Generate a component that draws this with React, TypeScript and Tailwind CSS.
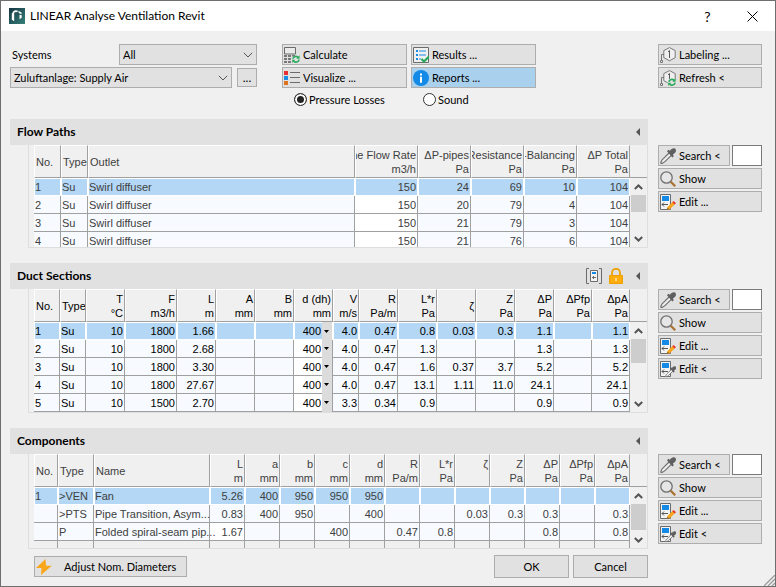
import { useState } from 'react';
import type { ReactNode } from 'react';
import clsx from 'clsx';

type Column = {
  label: string;
  unit?: string;
  width?: number;
  align?: 'left' | 'right';
  top?: boolean;
};

/* ---------- Icons ---------- */

function AppIcon() {
  return (
    <svg width="16" height="16" viewBox="0 0 16 16" className="shrink-0">
      <defs>
        <linearGradient id="app-bg" x1="0" y1="0" x2="1" y2="1">
          <stop offset="0" stopColor="#143541" />
          <stop offset="1" stopColor="#37807a" />
        </linearGradient>
      </defs>
      <rect width="16" height="16" fill="url(#app-bg)" />
      <path d="M2.800 5.200L5.200 4v9.200l-2.400-1.400z" fill="#fff" />
      <path d="M3.300 4L6 2.300l2.600.200v1.400L6 4.200 4.400 5z" fill="#fff" />
      <path d="M9.300 2.800l3.200 1.800v1.700L9.800 5zM10.500 6.700l2.200.500v2.600l-2.200 1.500z" fill="#fff" />
    </svg>
  );
}

function RefreshBadge() {
  return (
    <g fill="none" stroke="#27a95a" strokeWidth="1.600">
      <path d="M8.800 11.800a3.200 3.200 0 0 1 5.600-1.200" />
      <path d="M15.200 12.600a3.200 3.200 0 0 1-5.600 1.300" />
      <path d="M15.600 8.300v3.400h-3.200zM8.200 16v-3.200h3z" fill="#27a95a" stroke="none" />
    </g>
  );
}

function CalculateIcon() {
  return (
    <svg width="16" height="16" viewBox="0 0 16 16" className="shrink-0">
      <path d="M.500 .500h11v6.500H.500z" fill="#e9e9e9" stroke="#6b6b6b" />
      <path d="M0 8h3v2H0zM4 8h3v2H4zM8 8h3v1.500H8zM0 11h3v2H0zM4 11h3v2H4zM0 14h3v2H0zM4 14h3v2H4z" fill="#777" />
      <RefreshBadge />
    </svg>
  );
}

function ResultsIcon() {
  return (
    <svg width="16" height="16" viewBox="0 0 16 16" className="shrink-0">
      <path d="M.500 .500h15v15H.500z" fill="#f0f0f0" stroke="#6b6b6b" />
      <path d="M3 3h2v2H3zM3 7h2v2H3zM3 11h2v2H3zM6 3.500h7v1H6zM6 7.500h7v1H6zM6 11.500h2v1H6z" fill="#1b8ce3" />
      <path d="M8.500 12l2.500 2.500 5-5" fill="none" stroke="#27a95a" strokeWidth="2.200" />
    </svg>
  );
}

function VisualizeIcon() {
  return (
    <svg width="16" height="16" viewBox="0 0 16 16" className="shrink-0">
      <path d="M0 1h4v4H0z" fill="#e93030" />
      <path d="M0 6h4v4H0z" fill="#1b8ce3" />
      <path d="M0 11h4v4H0z" fill="#dc7420" />
      <path d="M6 2.500h10M6 7.500h10M6 12.500h10" stroke="#6b6b6b" />
    </svg>
  );
}

function InfoIcon() {
  return (
    <svg width="16" height="16" viewBox="0 0 16 16" className="shrink-0">
      <circle cx="8" cy="8" r="8" fill="#148ae6" />
      <path d="M7 3.500h2v2H7zM7 6.800h2v6H7z" fill="#fff" />
    </svg>
  );
}

function LabelIcon({ refresh }: { refresh?: boolean }) {
  return (
    <svg width="16" height="16" viewBox="0 0 16 16" className="shrink-0">
      <path d="M9.500 .600l5.700 3v7l-5.700 3.200-5.700-3.200v-7z" fill="#efefef" stroke="#777" />
      <path d="M8 4.800l1.500-1.300V11" fill="none" stroke="#555" />
      <path d="M4 7.500H1.500v6" fill="none" stroke="#777" />
      <path d="M.500 13.500h2v2h-2z" fill="#eee" stroke="#777" />
      {refresh && <circle cx="12" cy="12.300" r="4.300" fill="#e1e1e1" />}
      {refresh && <RefreshBadge />}
    </svg>
  );
}

function DropperShape() {
  return (
    <>
      <path d="M9 5L2.600 11.400C1.500 12.500.500 15 .900 15.300s2.800-.400 4-1.600L11.300 7.300" fill="#efefef" stroke="#707070" strokeWidth="1.200" />
      <path d="M7 3.300l1.500-1.500 1.400 1C10.900 1.300 12.600 0 14.200.300c1.800.400 2.300 2.500 1.300 3.900-.700 1-1.600 1.700-2.600 2.400l.900 1.600-1.500 1.400z" fill="#606060" />
    </>
  );
}

function DropperIcon() {
  return (
    <svg width="16" height="16" viewBox="0 0 16 16" className="shrink-0">
      <DropperShape />
    </svg>
  );
}

function MagnifierIcon() {
  return (
    <svg width="16" height="16" viewBox="0 0 16 16" className="shrink-0">
      <circle cx="6.500" cy="6.500" r="5.700" fill="#e6e6e6" stroke="#707070" strokeWidth="1.300" />
      <path d="M10.700 10.700l4.500 4.500" stroke="#a8702c" strokeWidth="2.200" />
    </svg>
  );
}

function EditIcon({ picker }: { picker?: boolean }) {
  return (
    <svg width="16" height="16" viewBox="0 0 16 16" className="shrink-0">
      <path d="M.500 .500h10v15H.500z" fill="#f3f3f3" stroke="#6b6b6b" />
      <path d="M2 2h7v5H2z" fill="#148ae6" />
      <path d="M2 10.500h6M4 8.500l-2 2 2 2" fill="none" stroke="#555" />
      {picker ? (
        <g transform="translate(5 5) scale(.7)">
          <DropperShape />
        </g>
      ) : (
        <>
          <path d="M7.500 13L13 7.500l2.300 2.300-5.500 5.500-3 .700z" fill="#f7a51c" />
          <path d="M12.300 8.200l1.300-1.300 2.400 2.300-1.400 1.400z" fill="#ee3333" />
          <path d="M7.300 13.400l2 2-2.600.600z" fill="#8a6a3a" />
        </>
      )}
    </svg>
  );
}

function LightningIcon() {
  return (
    <svg width="16" height="16" viewBox="0 0 16 16" className="shrink-0">
      <path d="M9.500 0L0 9h5.500L5 16l10.800-9.200H10z" fill="#f9a61a" />
    </svg>
  );
}

function BracketIcon() {
  return (
    <svg width="16" height="16" viewBox="0 0 16 16">
      <path d="M3 .500H.500v15H3M13 .500h2.500v15H13" fill="none" stroke="#6b6b6b" />
      <path d="M4.500 2.500h7v11h-7z" fill="#f3f3f3" stroke="#6b6b6b" />
      <path d="M6 4h4v2H6z" fill="#148ae6" />
      <path d="M6 9.500h4M7.500 8v3" stroke="#6b6b6b" />
    </svg>
  );
}

function LockIcon() {
  return (
    <svg width="14" height="16" viewBox="0 0 14 16">
      <path d="M3 8V4.500a4 3.700 0 0 1 8 0V8" fill="none" stroke="#eda006" strokeWidth="1.800" />
      <path d="M.500 7.500h13v8H.500z" fill="#ffad0a" stroke="#eda006" />
      <path d="M7 10v3" stroke="#fff" />
    </svg>
  );
}

function Chevron({ up }: { up?: boolean }) {
  return (
    <svg width="9" height="6" viewBox="0 0 9 6">
      <path d={up ? 'M.800 5L4.500 1.500 8.200 5' : 'M.800 1L4.500 4.500 8.200 1'} fill="none" stroke="#555" strokeWidth="2" />
    </svg>
  );
}

/* ---------- Controls ---------- */

function Button({ icon, children, className }: { icon?: ReactNode; children: ReactNode; className?: string }) {
  return (
    <button
      type="button"
      className={clsx(
        'flex h-[21px] items-center gap-[3px] border border-[#adadad] pl-px whitespace-nowrap text-black',
        className ?? 'bg-[#e1e1e1]',
      )}
    >
      {icon}
      <span className="pt-px">{children}</span>
    </button>
  );
}

function Dropdown({ id, value, label, className }: { id: string; value: string; label?: string; className: string }) {
  return (
    <div className={clsx('relative', className)}>
      <select
        id={id}
        aria-label={label}
        defaultValue={value}
        className="block h-[21px] w-full appearance-none border border-[#adadad] bg-[#e1e1e1] pt-px pl-[3px] text-black outline-none"
      >
        <option>{value}</option>
      </select>
      <svg width="10" height="6" viewBox="0 0 10 6" className="pointer-events-none absolute top-2 right-1">
        <path d="M.800 .800L5 5 9.200 .800" fill="none" stroke="#555" />
      </svg>
    </div>
  );
}

function Radio({ label, checked, onChange }: { label: string; checked: boolean; onChange: () => void }) {
  return (
    <label className="flex h-[19px] items-center gap-0.5 pl-3">
      <input
        type="radio"
        name="mode"
        checked={checked}
        onChange={onChange}
        className="h-[13px] w-[13px] appearance-none rounded-full border border-[#333] bg-white checked:bg-[#222] checked:shadow-[inset_0_0_0_2px_white]"
      />
      <span className="pt-px">{label}</span>
    </label>
  );
}

function ScrollBar({ thumb }: { thumb: string }) {
  return (
    <div className="flex w-[17px] flex-col bg-[#f0f0f0]">
      <div className="h-[33px] shrink-0 border-b border-[#a0a0a0]" />
      <div className="flex h-[17px] shrink-0 items-center justify-center">
        <Chevron up />
      </div>
      <div className={clsx('mx-px shrink-0 bg-[#cdcdcd]', thumb)} />
      <div className="mt-auto flex h-[17px] shrink-0 items-center justify-center">
        <Chevron />
      </div>
    </div>
  );
}

function DataTable({
  columns,
  rows,
  dark,
  editable,
  selectColumn,
  filler,
}: {
  columns: Column[];
  rows: string[][];
  dark?: boolean;
  editable?: (row: number, col: number) => boolean;
  selectColumn?: number;
  filler?: boolean;
}) {
  return (
    <table
      className={clsx(
        "w-full table-fixed border-separate border-spacing-0 font-['Liberation_Sans',Arial,sans-serif] text-[11px] leading-[14px]",
        dark ? 'text-black' : 'text-[#404040]',
      )}
    >
      <colgroup>
        {columns.map((c, i) => (
          <col key={i} style={c.width ? { width: c.width } : undefined} />
        ))}
      </colgroup>
      <thead>
        <tr className="h-[33px]">
          {columns.map((c, i) => (
            <th
              key={i}
              className="overflow-hidden border-t border-r border-b border-l border-t-white border-r-[#a0a0a0] border-b-[#a0a0a0] border-l-white p-0 font-normal"
            >
              <div
                className={clsx(
                  'flex h-[31px] flex-col overflow-hidden px-px whitespace-nowrap',
                  c.align === 'left' ? 'items-start' : 'items-end',
                  c.top ? 'pt-0.5' : 'justify-center',
                )}
              >
                <span>{c.label}</span>
                {c.unit && <span>{c.unit}</span>}
              </div>
            </th>
          ))}
        </tr>
      </thead>
      <tbody>
        {rows.map((row, r) => (
          <tr key={r} className={clsx('h-[18px]', r === 0 ? 'bg-[#b3d7f5]' : 'bg-[#f7fbff]')}>
            {columns.map((c, i) => (
              <td
                key={i}
                className={clsx(
                  'border-r border-b px-0 whitespace-nowrap',
                  r === 0 ? 'border-t border-l border-white' : 'border-[#a0a0a0] pl-px',
                  c.align === 'left' ? 'text-left' : 'text-right',
                  editable?.(r, i) && 'bg-white',
                )}
              >
                {i === selectColumn ? (
                  <div className="relative">
                    <select
                      aria-label={`Diameter ${row[0]}`}
                      defaultValue={row[i]}
                      className="block w-full appearance-none pr-[11px] [text-align-last:right] outline-none"
                    >
                      <option>{row[i]}</option>
                    </select>
                    <span className="pointer-events-none absolute -inset-y-0.5 right-0 flex w-2.5 items-center justify-center bg-[#dcdcdc]">
                      <svg width="6" height="3" viewBox="0 0 6 3">
                        <path d="M0 0h5L2.500 3z" fill="#000" />
                      </svg>
                    </span>
                  </div>
                ) : (
                  <div className={clsx('h-[14px]', c.align !== 'left' && 'pr-px')}>{row[i]}</div>
                )}
              </td>
            ))}
          </tr>
        ))}
        {filler && (
          <tr className="h-[18px]">
            {columns.map((_, i) => (
              <td key={i} className="border-r border-[#a0a0a0] p-0" />
            ))}
          </tr>
        )}
      </tbody>
    </table>
  );
}

function Section({
  title,
  tools,
  height,
  thumb,
  pickEdit,
  children,
}: {
  title: string;
  tools?: ReactNode;
  height: string;
  thumb: string;
  pickEdit?: boolean;
  children: ReactNode;
}) {
  return (
    <section className="flex gap-2.5">
      <div className="min-w-0 flex-1">
        <header className="flex h-[26px] items-center bg-[#e1e1e1] pr-2 pl-[7px]">
          <h2 className="flex-1 text-[12px] font-bold">{title}</h2>
          {tools}
          <button type="button" aria-label={`Collapse ${title}`} className="ml-[13px]">
            <svg width="4" height="8" viewBox="0 0 4 8">
              <path d="M4 0v8L0 4z" fill="#555" />
            </svg>
          </button>
        </header>
        <div className={clsx('ml-[18px] flex overflow-hidden border-r border-b border-l border-[#dedede] pl-[5px]', height)}>
          <div className="min-w-0 flex-1">{children}</div>
          <ScrollBar thumb={thumb} />
        </div>
      </div>
      <div className="flex w-[104px] flex-col gap-0.5 pt-[26px]">
        <div className="flex gap-0.5">
          <Button icon={<DropperIcon />} className="w-[72px] bg-[#e1e1e1]">Search &lt;</Button>
          <input aria-label={`Search ${title}`} className="h-[21px] w-[30px] border border-[#7a7a7a] bg-white px-1 outline-none" />
        </div>
        <Button icon={<MagnifierIcon />}>Show</Button>
        <Button icon={<EditIcon />}>Edit ...</Button>
        {pickEdit && <Button icon={<EditIcon picker />}>Edit &lt;</Button>}
      </div>
    </section>
  );
}

/* ---------- Data ---------- */

const flowColumns: Column[] = [
  { label: 'No.', width: 27, align: 'left' },
  { label: 'Type', width: 27, align: 'left' },
  { label: 'Outlet', align: 'left' },
  { label: 'ne Flow Rate', unit: 'm3/h', width: 63 },
  { label: 'ΔP-pipes', unit: 'Pa', width: 53 },
  { label: 'Resistance', unit: 'Pa', width: 53 },
  { label: '-Balancing', unit: 'Pa', width: 53 },
  { label: 'ΔP Total', unit: 'Pa', width: 53 },
];

const flowRows = [
  ['1', 'Su', 'Swirl diffuser', '150', '24', '69', '10', '104'],
  ['2', 'Su', 'Swirl diffuser', '150', '20', '79', '4', '104'],
  ['3', 'Su', 'Swirl diffuser', '150', '21', '79', '3', '104'],
  ['4', 'Su', 'Swirl diffuser', '150', '21', '76', '6', '104'],
];

const ductColumns: Column[] = [
  { label: 'No.', width: 26, align: 'left' },
  { label: 'Type', width: 26, align: 'left' },
  { label: 'T', unit: '°C', width: 39 },
  { label: 'F', unit: 'm3/h', width: 52 },
  { label: 'L', unit: 'm', width: 39 },
  { label: 'A', unit: 'mm', width: 39 },
  { label: 'B', unit: 'mm', width: 39 },
  { label: 'd (dh)', unit: 'mm', width: 39 },
  { label: 'V', unit: 'm/s', width: 26 },
  { label: 'R', unit: 'Pa/m', width: 39 },
  { label: 'L*r', unit: 'Pa', width: 39 },
  { label: 'ζ', width: 39 },
  { label: 'Z', unit: 'Pa', width: 39 },
  { label: 'ΔP', unit: 'Pa', width: 39 },
  { label: 'ΔPfp', unit: 'Pa', width: 38 },
  { label: 'ΔpA', unit: 'Pa', width: 38 },
];

const ductRows = [
  ['1', 'Su', '10', '1800', '1.66', '', '', '400', '4.0', '0.47', '0.8', '0.03', '0.3', '1.1', '', '1.1'],
  ['2', 'Su', '10', '1800', '2.68', '', '', '400', '4.0', '0.47', '1.3', '', '', '1.3', '', '1.3'],
  ['3', 'Su', '10', '1800', '3.30', '', '', '400', '4.0', '0.47', '1.6', '0.37', '3.7', '5.2', '', '5.2'],
  ['4', 'Su', '10', '1800', '27.67', '', '', '400', '4.0', '0.47', '13.1', '1.11', '11.0', '24.1', '', '24.1'],
  ['5', 'Su', '10', '1500', '2.70', '', '', '400', '3.3', '0.34', '0.9', '', '', '0.9', '', '0.9'],
];

const componentColumns: Column[] = [
  { label: 'No.', width: 24, align: 'left' },
  { label: 'Type', width: 36, align: 'left' },
  { label: 'Name', align: 'left' },
  { label: 'L', unit: 'm', width: 35 },
  { label: 'a', unit: 'mm', width: 35 },
  { label: 'b', unit: 'mm', width: 35 },
  { label: 'c', unit: 'mm', width: 35 },
  { label: 'd', unit: 'mm', width: 35 },
  { label: 'R', unit: 'Pa/m', width: 35 },
  { label: 'L*r', unit: 'Pa', width: 35 },
  { label: 'ζ', width: 35, top: true },
  { label: 'Z', unit: 'Pa', width: 35 },
  { label: 'ΔP', unit: 'Pa', width: 35 },
  { label: 'ΔPfp', unit: 'Pa', width: 35 },
  { label: 'ΔpA', unit: 'Pa', width: 35 },
];

const componentRows = [
  ['1', '>VEN', 'Fan', '5.26', '400', '950', '950', '950', '', '', '', '', '', '', ''],
  ['', '>PTS', 'Pipe Transition, Asym...', '0.83', '400', '950', '', '400', '', '', '0.03', '0.3', '0.3', '', '0.3'],
  ['', 'P', 'Folded spiral-seam pip...', '1.67', '', '', '400', '', '0.47', '0.8', '', '', '0.8', '', '0.8'],
];

/* ---------- Window ---------- */

export default function App() {
  const [mode, setMode] = useState('pressure');

  return (
    <div className="relative flex min-h-screen flex-col border border-[#6e6e6e] bg-[#f0f0f0] font-['Lato','Open_Sans',sans-serif] text-[11px] text-black">
      <div className="flex h-[30px] items-center bg-white pl-2">
        <AppIcon />
        <h1 className="ml-[5px] flex-1 text-[12px]">LINEAR Analyse Ventilation Revit</h1>
        <button type="button" aria-label="Help" className="w-[45px] text-center text-[14px]">?</button>
        <button type="button" aria-label="Close" className="flex w-[45px] justify-center">
          <svg width="11" height="11" viewBox="0 0 11 11">
            <path d="M.500 .500l10 10M10.500 .500l-10 10" stroke="#000" />
          </svg>
        </button>
      </div>

      <main className="flex flex-1 flex-col pt-[13px] pr-[13px] pl-[9px]">
        <div className="mb-2.5 flex items-start">
          <div className="flex w-[247px] flex-col gap-0.5">
            <div className="flex items-center justify-between">
              <label htmlFor="systems" className="pt-0.5 pl-0.5">Systems</label>
              <Dropdown id="systems" value="All" className="w-[138px]" />
            </div>
            <div className="flex items-center gap-[5px]">
              <Dropdown id="system" label="System" value="Zuluftanlage: Supply Air" className="w-[222px]" />
              <button type="button" aria-label="Browse" className="h-[19px] w-5 border border-[#adadad] bg-[#e1e1e1] text-[12px] leading-none">...</button>
            </div>
          </div>

          <div className="ml-[25px] grid grid-cols-[125px_125px] gap-x-1 gap-y-0.5">
            <Button icon={<CalculateIcon />}>Calculate</Button>
            <Button icon={<ResultsIcon />}>Results ...</Button>
            <Button icon={<VisualizeIcon />}>Visualize ...</Button>
            <Button icon={<InfoIcon />} className="bg-[#a9d1ee]">Reports ...</Button>
            <Radio label="Pressure Losses" checked={mode === 'pressure'} onChange={() => setMode('pressure')} />
            <Radio label="Sound" checked={mode === 'sound'} onChange={() => setMode('sound')} />
          </div>

          <div className="ml-auto flex w-[104px] flex-col gap-0.5">
            <Button icon={<LabelIcon />}>Labeling ...</Button>
            <Button icon={<LabelIcon refresh />}>Refresh &lt;</Button>
          </div>
        </div>

        <div className="flex flex-col gap-[15px]">
          <Section title="Flow Paths" height="h-[103px]" thumb="h-[17px]">
            <DataTable columns={flowColumns} rows={flowRows} editable={(r, c) => r > 0 && c === 3} />
          </Section>

          <Section
            title="Duct Sections"
            height="h-[124px]"
            thumb="h-6"
            pickEdit
            tools={
              <div className="flex gap-[7px]">
                <button type="button" aria-label="Edit mode"><BracketIcon /></button>
                <button type="button" aria-label="Lock"><LockIcon /></button>
              </div>
            }
          >
            <DataTable columns={ductColumns} rows={ductRows} dark selectColumn={7} editable={(r, c) => r > 0 && c === 7} />
          </Section>

          <Section title="Components" height="h-[95px]" thumb="h-[26px]" pickEdit>
            <DataTable columns={componentColumns} rows={componentRows} filler editable={(r, c) => r === 2 && c === 3} />
          </Section>
        </div>

        <div className="mt-1.5 mr-[114px] ml-6 flex items-center gap-1">
          <button type="button" className="mr-auto flex h-[21px] w-[153px] items-center gap-3 border border-[#adadad] bg-[#e1e1e1] pl-px">
            <LightningIcon />
            <span className="pt-px">Adjust Nom. Diameters</span>
          </button>
          <button type="button" className="h-[23px] w-[75px] border border-[#adadad] bg-[#e1e1e1] pt-px">OK</button>
          <button type="button" className="h-[23px] w-[75px] border border-[#adadad] bg-[#e1e1e1] pt-px">Cancel</button>
        </div>
      </main>

      <svg width="11" height="11" viewBox="0 0 11 11" className="absolute right-0 bottom-0">
        <path d="M0 11L11 0M4 11l7-7M8 11l3-3" stroke="#9a9a9a" strokeWidth="1.300" />
      </svg>
    </div>
  );
}
